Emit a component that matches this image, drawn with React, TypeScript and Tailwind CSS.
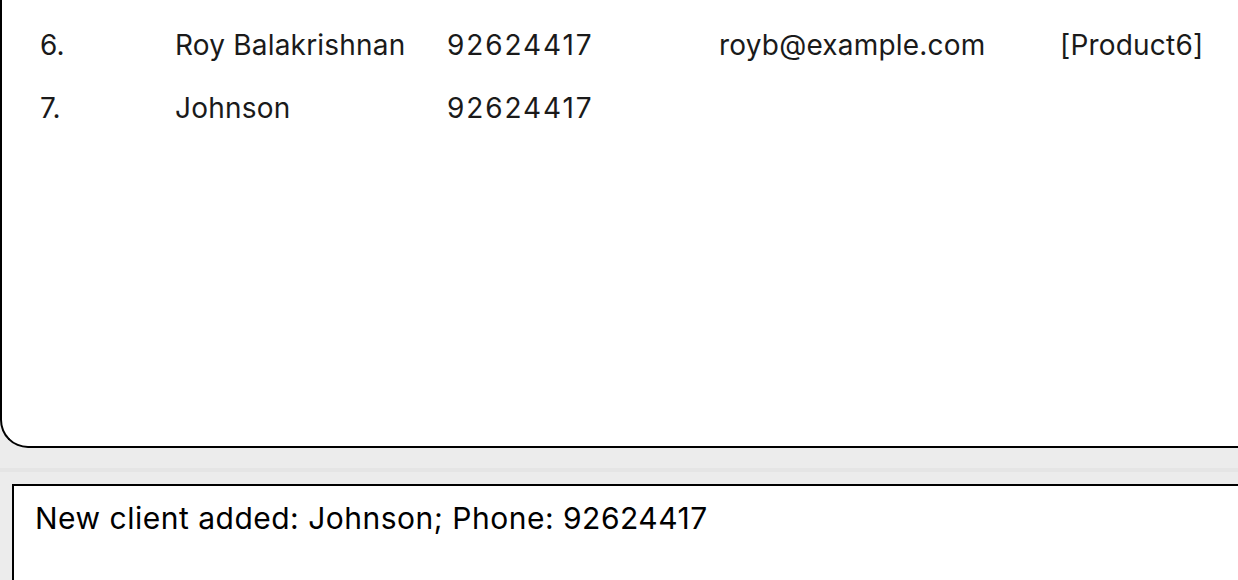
import React from "react";

const clients = [
  { idx: "6.", name: "Roy Balakrishnan", phone: "92624417", email: "royb@example.com", products: "[Product6]" },
  { idx: "7.", name: "Johnson", phone: "92624417", email: "", products: "" },
];

export default function App() {
  return (
    <div
      className="w-[1238px] h-[580px] overflow-hidden bg-[#ececec] flex flex-col text-[#1a1a1a]"
      style={{ fontFamily: "Inter, 'Noto Sans', sans-serif" }}
    >
      {/* Client list */}
      <div className="h-[448px] shrink-0 bg-white border-l-2 border-b-2 border-black rounded-bl-[28px] pt-[13px] pl-[38px]">
        {clients.map((c) => (
          <div
            key={c.idx}
            className="h-[63px] grid grid-cols-[135px_272px_272px_341px_200px] items-center text-[28px] tracking-[0.2px] whitespace-nowrap"
          >
            <span>{c.idx}</span>
            <span>{c.name}</span>
            <span className="tracking-[1.9px]">{c.phone}</span>
            <span>{c.email}</span>
            <span>{c.products}</span>
          </div>
        ))}
      </div>

      {/* Divider */}
      <div className="h-[36px] shrink-0 flex flex-col">
        <div className="h-[20px]" />
        <div className="h-[4px] bg-[#e5e5e5]" />
      </div>

      {/* Result box */}
      <div className="flex-1 ml-[12px] bg-white border-l-2 border-t-2 border-black pl-[21px] pt-[10px]">
        <p className="text-[30px] tracking-[0.5px] text-black whitespace-nowrap">
          New client added: Johnson; Phone: 92624417
        </p>
      </div>
    </div>
  );
}
